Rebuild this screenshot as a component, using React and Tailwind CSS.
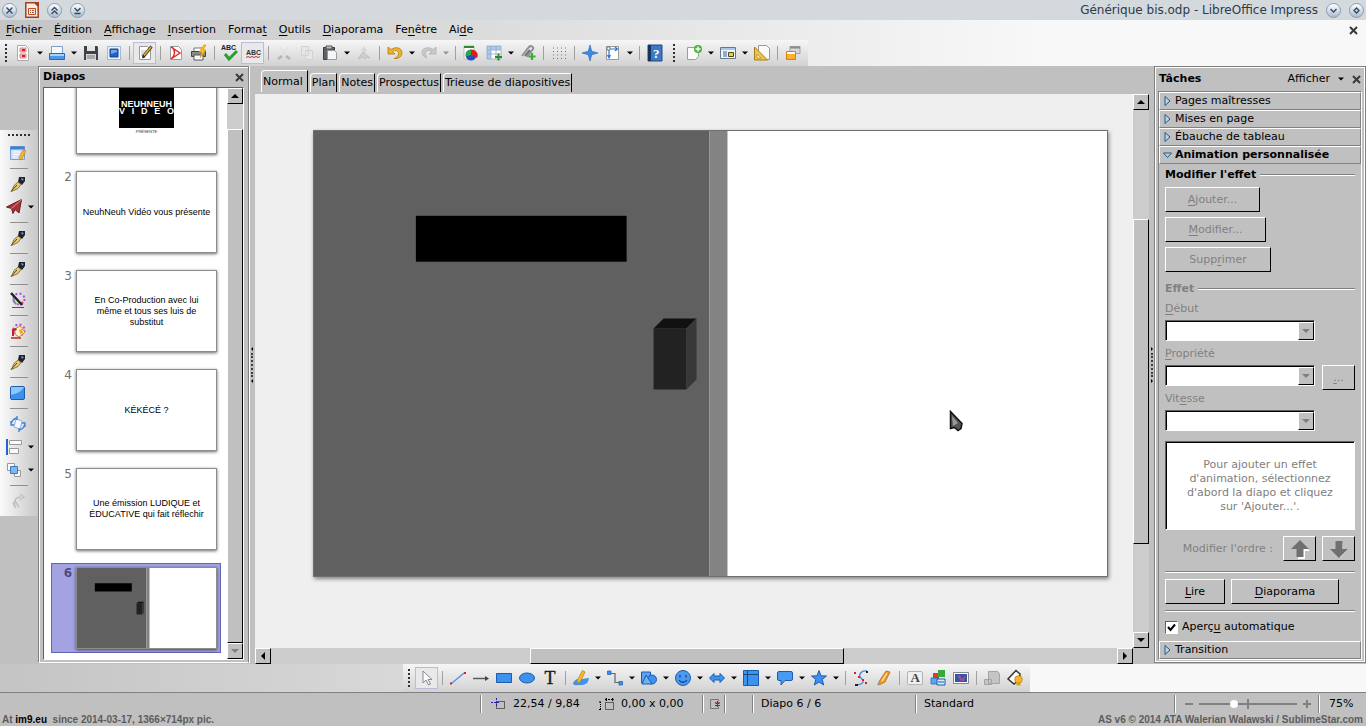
import { clsx } from 'clsx';

const RAISED = 'border border-t-white border-l-white border-r-black border-b-black bg-[#c0c0c0]';
const SUNKEN = 'border border-t-[#606060] border-l-[#606060] border-b-white border-r-white bg-white shadow-[inset_1px_1px_#000]';
const LABEL = 'text-[#808080]';

/* ---------- small drawing helpers ---------- */

function Icon({ children, className }) {
  return (
    <svg viewBox="0 0 16 16" className={clsx('h-4 w-4 shrink-0 overflow-visible', className)} fill="none" aria-hidden="true">
      {children}
    </svg>
  );
}

function Arrow({ dir = 'down', className = 'h-2 w-2' }) {
  const paths = {
    down: 'M0 2h8L4 6z',
    up: 'M0 6h8L4 2z',
    left: 'M6 0v8L2 4z',
    right: 'M2 0v8l4-4z',
  };
  return (
    <svg viewBox="0 0 8 8" className={clsx('shrink-0', className)} fill="currentColor" aria-hidden="true">
      <path d={paths[dir]} />
    </svg>
  );
}

function Cross() {
  return (
    <svg viewBox="0 0 9 9" className="h-[9px] w-[9px]" stroke="#3a3a3a" strokeWidth="2" aria-hidden="true">
      <path d="M1 1l7 7M8 1L1 8" />
    </svg>
  );
}

const page = <path d="M2.5 1.5h8l3 3v10h-11z" fill="#fff" stroke="#9a9a9a" />;

const icons = {
  newDoc: (
    <>
      <path d="M2.5.5h8l3 3v12h-11z" fill="#fff" stroke="#aaa" />
      <path d="M5 3h6v4H5zM5 9h6v4H5z" fill="#e9b8b8" stroke="#d98a8a" />
      <path d="M7 4h3v2H7zM7 10h3v2H7z" fill="#d0202c" />
    </>
  ),
  open: (
    <>
      <path d="M2.5 1.5h11v8h-11z" fill="#f4f8fc" stroke="#7f9fc4" />
      <path d="M.5 8.5h15v6H.5z" fill="#4c97e6" stroke="#2b67ae" />
      <path d="M1 9h14v2H1z" fill="#a9d0f7" />
    </>
  ),
  save: (
    <>
      <path d="M1 1h13l1 1v13H1z" fill="#3f4347" />
      <path d="M4 1h8v5H4z" fill="#e4e6e8" />
      <path d="M3 9h10v6H3z" fill="#d5d8dc" />
      <path d="M4 11h8M4 13h8" stroke="#777" />
    </>
  ),
  mail: (
    <>
      <path d="M1.5 1.5h13v13h-13z" fill="#e9f2fc" stroke="#5e86b8" strokeDasharray="1 1" />
      <path d="M4 4h8v8H4z" fill="#1e63c8" stroke="#17448a" />
      <path d="M5 5h6v2L5 9z" fill="#6fa8ee" />
    </>
  ),
  edit: (
    <>
      {page}
      <path d="M4 6h6M4 8h4M4 10h3" stroke="#bbb" />
      <path d="M14.5 1.5L6 12" stroke="#3b3018" strokeWidth="3" />
      <path d="M14 2L7 10.5" stroke="#e6b83a" strokeWidth="1.5" />
      <path d="M5 13.5l.5-2.5 2 1.5z" fill="#222" />
    </>
  ),
  pdf: (
    <>
      {page}
      <path d="M3 2l9 6-9 6c4-3 5-8 1-12" stroke="#dd2a2a" strokeWidth="1.4" />
    </>
  ),
  print: (
    <>
      <path d="M3 3h9v4H3z" fill="#fff" stroke="#777" />
      <path d="M.5 6.5h14v5H.5z" fill="#8c8c8c" stroke="#444" />
      <path d="M3 10h9v5H3z" fill="#fff" stroke="#555" />
      <path d="M13 0L8 7h3l-2 6 6-8h-3l3-5z" fill="#ffc517" stroke="#d08d00" strokeWidth=".6" />
    </>
  ),
  spell: (
    <>
      <text x="-1" y="5" fontSize="7" fontWeight="700" fontFamily="Liberation Sans, sans-serif" fill="#222">ABC</text>
      <path d="M3 9l4 5 8-8" stroke="#28a035" strokeWidth="3" />
    </>
  ),
  autoSpell: (
    <>
      <text x="1" y="10" fontSize="7" fontWeight="700" fontFamily="Liberation Sans, sans-serif" fill="#333">ABC</text>
      <path d="M1 12.5l2-1 2 1 2-1 2 1 2-1 2 1 2-1" stroke="#c03030" />
    </>
  ),
  cut: (
    <g stroke="#b4b4b4">
      <path d="M4 2l6 9M12 2L6 11" stroke="#dedede" />
      <path d="M2 14l4-3M14 14l-4-3" strokeWidth="2.5" />
    </g>
  ),
  copy: <path d="M2.5 1.5h7v9h-7zM6.5 5.5h7v9h-7z" fill="#e6e6e6" stroke="#d2d2d2" />,
  paste: (
    <>
      <path d="M1.5 2.5h11v12h-11z" fill="#5c6268" stroke="#3b4046" />
      <path d="M4 1h6v3H4z" fill="#b9bdc2" stroke="#555" />
      <path d="M5.5 5.5h7l2 2v7h-9z" fill="#f6f6f6" stroke="#999" />
    </>
  ),
  brush: (
    <>
      <path d="M8 1l3 5-2 2-4-3z" fill="#d8d8d8" />
      <path d="M2 14l5-7 7 6-4-1-1 2-2-2z" fill="#cfcfcf" stroke="#c0c0c0" />
    </>
  ),
  undo: (
    <path
      d="M1 2v7h7L5.5 6.5C8 4.5 11.5 5.5 11.5 8.5S9 13 7 13.5c5 .5 8-2 8-6C15 3 9 1 4 4.5z"
      fill="#eeb32c"
      stroke="#b07a10"
      strokeWidth=".8"
    />
  ),
  redo: (
    <path
      d="M15 2v7H8l2.5-2.5C8 4.5 4.500 5.500 4.500 8.500c0 2 .5 3 1.500 4-3-.5-5-2-5-5C1 3 7 1 12 4.500z"
      fill="#c9c9c9"
      stroke="#b0b0b0"
      strokeWidth=".8"
    />
  ),
  chart: (
    <>
      <path d="M1 1h10v13H1z" fill="#fff" stroke="#bbb" />
      <path d="M1 1h10v2H1z" fill="#2d8a35" />
      <circle cx="8" cy="10" r="5.5" fill="#1c50c4" />
      <path d="M8 10V5a5.500 5.500 0 0 1 6 8z" fill="#d81e1e" />
      <path d="M8 10L3 11.500A5.500 5.500 0 0 1 8 4.500z" fill="#2fa838" />
    </>
  ),
  table: (
    <>
      <path d="M1 1h14v13H1z" fill="#fff" />
      <path d="M1 1h14v4H1zM1 1h4v13H1z" fill="#a9cdf3" />
      <path d="M1 1h14v13H1zM1 5h14M1 9h14M5 1v13M10 1v13" stroke="#8aa0b8" strokeWidth=".7" />
      <path d="M12.500 8.500v7M9 12h7" stroke="#2c8a2c" strokeWidth="2" />
    </>
  ),
  link: (
    <>
      <path d="M2 11l7-9c2-2 5 0 4 2l-6 8" stroke="#8d9196" strokeWidth="2" />
      <path d="M5 11l5-6" stroke="#6d7176" strokeWidth="2" />
      <path d="M12 8v7M8.500 11.500h7" stroke="#3bb030" strokeWidth="2.200" />
    </>
  ),
  grid: (
    <path d="M2 3h13M2 6.500h13M2 10h13M2 13.500h13" stroke="#777" strokeDasharray="1 3" />
  ),
  navigator: (
    <path d="M8 0l1.700 6.300L16 8l-6.300 1.700L8 16 6.300 9.700 0 8l6.300-1.700z" fill="#3b8be6" stroke="#2163b5" strokeWidth=".6" />
  ),
  zoom: (
    <>
      <path d="M1.500 1.500h12v13h-12z" fill="#fff" stroke="#999" />
      <path d="M4 4v8M4 4h8M10 2l2.500 2L10 6M2.500 10L4 13l1.500-3" stroke="#2c77d0" strokeWidth="1.200" />
      <path d="M2 2h3v3H2z" fill="#fff" stroke="#666" strokeWidth=".8" />
    </>
  ),
  help: (
    <>
      <path d="M1 0h14v16H1z" fill="#3d78c4" stroke="#1f4a86" />
      <path d="M1 0h3v16H1z" fill="#16335c" />
      <text x="6" y="13" fontSize="13" fontWeight="700" fontFamily="Liberation Serif, serif" fill="#fff">?</text>
    </>
  ),
  newSlide: (
    <>
      <path d="M1.500 2.500h11v9l-3 3h-8z" fill="#fafafa" stroke="#9c9c9c" />
      <circle cx="12" cy="4" r="4" fill="#49b13c" />
      <path d="M12 1.500v5M9.500 4h5" stroke="#fff" strokeWidth="1.500" />
    </>
  ),
  layout: (
    <>
      <path d="M.5 2.500h15v11H.5z" fill="#eef5fc" stroke="#66788c" />
      <path d="M1 3h14v2H1z" fill="#a9c6e4" />
      <path d="M3 7h4M3 9h4M3 11h4" stroke="#2c62a8" />
      <path d="M8.500 7.500h5v4h-5z" fill="#d8dc3a" stroke="#544a10" />
    </>
  ),
  design: (
    <>
      <path d="M4.500.5h8l3 3v11h-11z" fill="#fafafa" stroke="#999" />
      <path d="M.5 2v13h13z" fill="#eec54a" stroke="#a87d16" />
      <path d="M3 9v4h4z" fill="#fff" stroke="#a87d16" strokeWidth=".7" />
    </>
  ),
  present: (
    <>
      <path d="M5 1.500h10v7H5z" fill="#d6d6d6" stroke="#a2a2a2" />
      <path d="M5 1.500h10v2H5z" fill="#8d8d8d" />
      <path d="M1.500 6.500h9v8h-9z" fill="#ffb02a" stroke="#c98412" />
      <path d="M2 7h8v2H2z" fill="#fff" />
    </>
  ),
  pointer: <path d="M4 1v12l3-3 2.500 5 2-1L9 9.500h4z" fill="#fafafa" stroke="#8a8a8a" />,
  line: (
    <>
      <path d="M1.500 13.500L14 3" stroke="#5a8de0" strokeWidth="1.400" />
      <path d="M0 12.500h2v2H0zM14 2h2v2h-2z" fill="#d3222a" />
    </>
  ),
  arrowLine: (
    <>
      <path d="M0 8.500h13" stroke="#555" strokeWidth="1.400" />
      <path d="M12 6l4 2.500-4 2.500z" fill="#444" />
    </>
  ),
  rect: <path d="M.5 3.500h15v9H.5z" fill="#3d92ee" stroke="#1b5cb0" />,
  ellipse: <ellipse cx="8" cy="8" rx="7.500" ry="5" fill="#3d92ee" stroke="#1b5cb0" />,
  text: (
    <text x="2.500" y="14" fontSize="18" fontFamily="Liberation Serif, serif" fill="#1c1c1c" stroke="#1c1c1c" strokeWidth=".4">T</text>
  ),
  curve: (
    <>
      <path d="M0 13c2-4 5-5 9-4l7-1c-1 5-3 7-8 7s-8 1-8-2z" fill="#3f93ec" />
      <path d="M9.500.5l2.500 1.500-5 10-3 1.500.5-3.500z" fill="#f6bf2c" stroke="#b98012" strokeWidth=".8" />
    </>
  ),
  connector: (
    <>
      <path d="M3 3.500h5v9h5" stroke="#666" strokeWidth="1.200" />
      <path d="M.5 1h3.500v3.500H.5zM12 11.500h3.500V15H12z" fill="#3d92ee" stroke="#1b5cb0" strokeWidth=".7" />
    </>
  ),
  shapes: (
    <>
      <path d="M.5 2h9v11h-9z" fill="#5aa6f2" stroke="#1b5cb0" />
      <circle cx="11" cy="9.500" r="4.500" fill="#3d92ee" stroke="#1b5cb0" />
      <path d="M1 14L5 5l6 9z" fill="#6db2f6" stroke="#1b5cb0" />
    </>
  ),
  smiley: (
    <>
      <circle cx="8" cy="8" r="7.500" fill="#4a9bf0" stroke="#1b5cb0" />
      <path d="M5 5v2.500M11 5v2.500M4 10c2 3 6 3 8 0" stroke="#12438a" strokeWidth="1.300" />
    </>
  ),
  blockArrow: <path d="M.5 8L5 3.500V6h6V3.500L15.500 8 11 12.500V10H5v2.500z" fill="#3d92ee" stroke="#1b5cb0" />,
  flowchart: (
    <>
      <path d="M.5.5h15v15H.5z" fill="#3d92ee" stroke="#1b5cb0" />
      <path d="M4.500 1v14M1 4.500h14" stroke="#14498f" />
    </>
  ),
  callout: (
    <path d="M2 1.500h12q1.500 0 1.500 1.500v6q0 1.500-1.500 1.500H8L4 15v-4.500H2Q.5 10.500.5 9V3Q.5 1.500 2 1.500z" fill="#4a9bf0" stroke="#1b5cb0" />
  ),
  star: <path d="M8 .5l2 5.300 5.500.2-4.300 3.500 1.500 5.500L8 12l-4.700 3 1.500-5.500L.5 6 6 5.800z" fill="#3d92ee" stroke="#1b5cb0" />,
  points: (
    <>
      <path d="M14 1C8 0 5 5 8 8s4 6-5 7" stroke="#4a86d8" strokeWidth="1.300" />
      <path d="M1 2h2v2H1zM5 6h2v2H5zM9 9h2v2H9zM12 12h2v2h-2z" fill="#d3222a" />
      <path d="M2 14h3v2H2zM13 1h2v2h-2z" fill="#222" />
    </>
  ),
  glue: (
    <>
      <path d="M10 1l4 1-5 10-4 2-3 1 2-5z" fill="#f49a2a" stroke="#b06410" strokeWidth=".8" />
      <path d="M5 14l-4 1 2-4z" fill="#9a9a9a" />
      <path d="M11 3L6 11" stroke="#ffd793" strokeWidth="1.500" />
    </>
  ),
  fontwork: (
    <>
      <path d="M2 1.500h12q1.500 0 1.500 1.500v10q0 1.500-1.500 1.500H2Q.5 14.500.5 13V3Q.5 1.500 2 1.500z" fill="#f0f0f0" stroke="#b4b4b4" />
      <text x="3.500" y="12" fontSize="13" fontWeight="700" fontFamily="Liberation Serif, serif" fill="#444">A</text>
    </>
  ),
  fromFile: (
    <>
      <path d="M3 3h6v6H3z" fill="#e13a2c" />
      <path d="M8 0h7v7H8z" fill="#38a838" />
      <path d="M1 8h7v6H1z" fill="#5aa6f2" stroke="#1b5cb0" strokeWidth=".7" />
      <path d="M7 9h8v6H7z" fill="#dcebfb" stroke="#1b5cb0" />
      <path d="M8 12h6" stroke="#1b5cb0" />
    </>
  ),
  gallery: (
    <>
      <path d="M.5 2.500h15v11H.5z" fill="#fff" stroke="#888" />
      <path d="M2 4h12v8H2z" fill="#2d57ad" />
      <path d="M4 6l3-1 2 4 4-4-2 6H8z" fill="#a94a8a" />
    </>
  ),
  rotateOff: <path d="M4.500 1.500h9l2 2v10h-11zM.5 9.500h7v5h-7z" fill="#c4c4c4" stroke="#a4a4a4" />,
  extrusion: (
    <>
      <path d="M9 .5l4 3.500-1 6-5 4-6-5z" fill="#fff" stroke="#333" strokeWidth="1.500" />
      <circle cx="11.500" cy="9.500" r="3.800" fill="#f5b52c" stroke="#b57d10" strokeWidth=".7" />
      <path d="M9.500 12h4v3.500h-4z" fill="#e09a18" />
    </>
  ),
  window: (
    <>
      <path d="M.5 1.500h14v13H.5z" fill="#cfe2f8" stroke="#7da0cc" />
      <path d="M.5 1.500h14v3H.5z" fill="#3a80da" />
      <path d="M3 7h7M3 9.500h6M3 12h4" stroke="#fff" />
      <path d="M13 5l3 1-4 8-3 1 .5-3z" fill="#f7b52c" stroke="#c07d14" strokeWidth=".6" />
    </>
  ),
  pen: (
    <>
      <path d="M9 1h6v4l-3 4-4-3z" fill="#1c2230" />
      <path d="M11 2l3 1-2 2z" fill="#7f93b8" />
      <path d="M8 6l3 2.500-3 4-6.500 3 2.500-6z" fill="#e4c878" stroke="#7a5f22" strokeWidth=".8" />
      <path d="M1 15.500L7 9" stroke="#5a4515" />
    </>
  ),
  send: (
    <>
      <path d="M.5 8L15.500.5 13 14 9 10.500 7 14.500 5.500 9.500z" fill="#a8323a" stroke="#6d1b22" />
      <path d="M5.500 9.500L15.500.5" stroke="#e08e92" />
    </>
  ),
  lineColor: (
    <>
      <circle cx="9" cy="7" r="5.500" stroke="#b04ce0" strokeWidth="2" strokeDasharray="2 2.300" />
      <path d="M3.500 7a5.500 5.500 0 0 0 3 5" stroke="#35b04a" strokeWidth="2" strokeDasharray="2 2" />
      <path d="M13 10l-2 2" stroke="#e0404a" strokeWidth="2" />
      <path d="M1 1l11 12" stroke="#222" strokeWidth="2.500" />
      <path d="M2 15.500h12" stroke="#555" />
    </>
  ),
  fillColor: (
    <>
      <circle cx="9" cy="7" r="5.500" stroke="#b04ce0" strokeWidth="2" strokeDasharray="2 2.300" />
      <path d="M5 6l5-3 5 6-6 5-4-3z" fill="#fff3cf" stroke="#c98c28" />
      <path d="M9 7l3-1 1 4-3 1z" fill="#f0a51e" />
      <path d="M2 6l4-1 1 2-3 1v5H2z" fill="#c8202a" />
      <path d="M1 15h10" stroke="#c8202a" strokeWidth="1.500" />
    </>
  ),
  area: (
    <>
      <path d="M2 1.500h11q1.500 0 1.500 1.500v10q0 1.500-1.500 1.500H2Q.5 14.500.5 13V3Q.5 1.500 2 1.500z" fill="#3b90ee" stroke="#1b5cb0" />
      <path d="M1 2h13q-3 6-13 8z" fill="#8cc6fa" />
    </>
  ),
  rotate: (
    <>
      <path d="M6 3l6 2-2 8-6-2z" fill="#f4f8fd" stroke="#8eb4e0" />
      <path d="M1 9a7 7 0 0 1 6-7M15 7a7 7 0 0 1-6 7M7 0v4M9 12v4M1 5v4h3M15 11V7h-3" stroke="#3b82d8" strokeWidth="1.300" />
    </>
  ),
  align: (
    <>
      <path d="M0 0h2v16H0z" fill="#1f6ac4" />
      <path d="M3.500 1.500h12v4h-12zM3.500 9.500h9v5h-9z" fill="#fafafa" stroke="#999" />
    </>
  ),
  arrange: (
    <>
      <path d="M1.500 1.500h7v7h-7z" fill="#fafafa" stroke="#999" />
      <path d="M8.500 8.500h6v6h-6z" fill="#fafafa" stroke="#999" />
      <path d="M4.500 4.500h7v7h-7z" fill="#7db8f4" stroke="#3a78c4" />
    </>
  ),
  effectOff: <path d="M5 14c-2-5 0-10 6-10M10 1l4 3-4 3M5 8l4 6M3 10l3 5" stroke="#c0c0c0" strokeWidth="1.500" />,
};

/* ---------- toolbars ---------- */

function Grip({ vertical = true, className }) {
  return vertical ? (
    <span className={clsx('flex items-center justify-center', className)}>
      <span className="h-[18px] border-l-2 border-dotted border-[#303030]" />
    </span>
  ) : (
    <span className={clsx('flex justify-center pt-1', className)}>
      <span className="w-[22px] border-t-2 border-dotted border-[#303030]" />
    </span>
  );
}

function Tool({ name, label, pressed, caret, off }) {
  return (
    <span className="flex h-6 items-center">
      <button
        type="button"
        aria-label={label}
        className={clsx(
          'flex h-[22px] w-[23px] items-center justify-center border',
          pressed ? 'border-[#bcbcd8] bg-[#e9e9ec]' : 'border-transparent'
        )}
      >
        <Icon>{icons[name]}</Icon>
      </button>
      {caret && (
        <button type="button" aria-label={`${label}, options`} className="flex h-[22px] w-[11px] items-center justify-center">
          <Arrow className={clsx('h-[6px] w-[6px]', off ? 'text-[#909090]' : 'text-black')} />
        </button>
      )}
    </span>
  );
}

const Sep = () => (
  <span className="flex w-2 shrink-0 justify-center">
    <span className="h-[14px] w-px bg-[#a0a0a0]" />
  </span>
);

const standardTools = [
  ['newDoc', 'Nouveau', 'caret'], ['open', 'Ouvrir', 'caret'], ['save', 'Enregistrer'], ['mail', 'Envoyer'], '|',
  ['edit', 'Mode édition', 'pressed'], '|', ['pdf', 'Exporter en PDF'], ['print', 'Imprimer'], '|',
  ['spell', 'Orthographe'], ['autoSpell', 'Vérification automatique', 'pressed'], '|',
  ['cut', 'Couper'], ['copy', 'Copier'], ['paste', 'Coller', 'caret'], ['brush', 'Pinceau'], '|',
  ['undo', 'Annuler', 'caret'], ['redo', 'Rétablir', 'caret off'], '|',
  ['chart', 'Diagramme'], ['table', 'Tableau', 'caret'], ['link', 'Hyperlien'], '|',
  ['grid', 'Grille'], '|', ['navigator', 'Navigateur'], ['zoom', 'Zoom', 'caret'], '|', ['help', 'Aide'],
];

const slideTools = [
  ['newSlide', 'Nouvelle diapo', 'caret'], ['layout', 'Mise en page', 'caret'], ['design', 'Conception'], '|',
  ['present', 'Lancer le diaporama'],
];

const drawTools = [
  ['pointer', 'Sélection', 'pressed'], '|', ['line', 'Ligne'], ['arrowLine', 'Flèche'], ['rect', 'Rectangle'],
  ['ellipse', 'Ellipse'], ['text', 'Texte'], '|', ['curve', 'Courbe', 'caret'], ['connector', 'Connecteur', 'caret'],
  ['shapes', 'Formes de base', 'caret'], ['smiley', 'Formes des symboles', 'caret'],
  ['blockArrow', 'Flèches pleines', 'caret'], ['flowchart', 'Organigrammes', 'caret'],
  ['callout', 'Légendes', 'caret'], ['star', 'Étoiles', 'caret'], '|', ['points', 'Points'],
  ['glue', 'Points de collage'], '|', ['fontwork', 'Fontwork'], ['fromFile', "À partir d'un fichier"],
  ['gallery', 'Gallery'], '|', ['rotateOff', 'Rotation'], ['extrusion', 'Extrusion'],
];

const sideTools = [
  ['window', 'Styles'], '|', ['pen', 'Ligne'], ['send', 'Extrémités', 'caret'], '|', ['pen', 'Style de ligne'], '|',
  ['pen', 'Largeur de ligne'], '|', ['lineColor', 'Couleur de ligne'], '|', ['fillColor', 'Couleur'], '|',
  ['pen', 'Remplissage'], '|', ['area', 'Ombre'], '|', ['rotate', 'Pivoter'], ['align', 'Alignement', 'caret'],
  ['arrange', 'Position', 'caret'], '|', ['effectOff', 'Interaction'],
];

function ToolList({ tools }) {
  return tools.map((t, i) =>
    t === '|' ? (
      <Sep key={i} />
    ) : (
      <Tool
        key={i}
        name={t[0]}
        label={t[1]}
        pressed={t[2] === 'pressed'}
        caret={t[2]?.startsWith('caret')}
        off={t[2]?.endsWith('off')}
      />
    )
  );
}

function SideToolbar() {
  return (
    <aside className="w-[38px] shrink-0 pt-16">
      <div className="flex flex-col bg-linear-to-r from-[#fafafa] to-[#c8c8c8] pb-1">
        <Grip vertical={false} className="h-[11px]" />
        {sideTools.map((t, i) =>
          t === '|' ? (
            <span key={i} className="flex h-2 items-center pl-2.5">
              <span className="h-px w-[18px] bg-[#909090]" />
            </span>
          ) : (
            <span key={i} className="flex h-[23px] items-center justify-center">
              <span className={clsx('flex items-center', !t[2] && 'pr-0.5')}>
                <Tool name={t[0]} label={t[1]} caret={t[2] === 'caret'} />
              </span>
            </span>
          )
        )}
      </div>
    </aside>
  );
}

/* ---------- title and menu ---------- */

function RoundButton({ label, d }) {
  return (
    <button
      type="button"
      aria-label={label}
      className="flex h-[15px] w-[15px] items-center justify-center rounded-full border border-[#8c9cac] bg-linear-to-b from-white to-[#a9bdd2]"
    >
      <svg viewBox="0 0 9 9" className="h-[9px] w-[9px]" fill="none" stroke="#33475c" strokeWidth="1.3" aria-hidden="true">
        <path d={d} />
      </svg>
    </button>
  );
}

function TitleBar() {
  return (
    <header className="flex h-5 shrink-0 items-center bg-[#d3d9dc] px-0.5 text-[#2c3a4c]">
      <RoundButton label="Fermer" d="M1.500 1.500l6 6M7.500 1.500l-6 6" />
      <svg viewBox="0 0 14 16" className="mx-2 h-4 w-[14px]" fill="none" aria-hidden="true">
        <path d="M.8.8h9l3.400 3.400v11H.8z" fill="#fbe9df" stroke="#a6401c" strokeWidth="1.500" />
        <path d="M9 0h5v5z" fill="#a6401c" />
        <path d="M3.500 6.500h7v6h-7zM5 8.500h1M7 8.500h2M5 10.500h1M7 10.500h2" stroke="#b04e28" />
      </svg>
      <div className="flex gap-2">
        <RoundButton label="Enrouler" d="M1.500 4.500l3-3 3 3M1.500 8l3-3 3 3" />
        <RoundButton label="Au-dessous" d="M1.500 2l3 3 3-3M1.500 7.500h6" />
      </div>
      <h1 className="ml-auto mr-2 text-xs">Générique bis.odp - LibreOffice Impress</h1>
      <div className="flex gap-2">
        <RoundButton label="Réduire" d="M1.500 3l3 3 3-3" />
        <RoundButton label="Maximiser" d="M4.500 2L7 4.500 4.500 7 2 4.500z" />
      </div>
    </header>
  );
}

const menus = [
  ['', 'F', 'ichier'], ['', 'É', 'dition'], ['', 'A', 'ffichage'], ['', 'I', 'nsertion'], ['Forma', 't', ''],
  ['', 'O', 'utils'], ['', 'D', 'iaporama'], ['Fe', 'n', 'être'], ['Ai', 'd', 'e'],
];

function Mnemonic({ parts }) {
  return (
    <>
      {parts[0]}
      <u className="underline-offset-2">{parts[1]}</u>
      {parts[2]}
    </>
  );
}

function MenuBar() {
  return (
    <nav className="flex h-5 items-center pl-1.5 pr-2">
      <ul className="flex gap-3">
        {menus.map((m) => (
          <li key={m.join('')}>
            <button type="button">
              <Mnemonic parts={m} />
            </button>
          </li>
        ))}
      </ul>
      <button type="button" aria-label="Fermer le document" className="ml-auto">
        <Cross />
      </button>
    </nav>
  );
}

/* ---------- scroll bars ---------- */

function ScrollButton({ dir, off }) {
  return (
    <button type="button" aria-label={`Défiler ${dir}`} className={clsx('flex h-4 w-4 shrink-0 items-center justify-center', RAISED)}>
      <Arrow dir={dir} className={clsx('h-2 w-2', off ? 'text-[#808080]' : 'text-black')} />
    </button>
  );
}

/* ---------- slide drawing, used on the canvas and in the list ---------- */

function DoorSlide() {
  return (
    <svg viewBox="0 0 794 446" preserveAspectRatio="none" className="block h-full w-full" aria-label="Diapo 6">
      <rect width="794" height="446" fill="#fff" />
      <rect width="396" height="446" fill="#606060" />
      <rect x="396" width="18" height="446" fill="#838383" />
      <rect x="102" y="85" width="211" height="46" fill="#000" />
      <path d="M340 198h33v61h-33z" fill="#222" />
      <path d="M340 198l10-10h33l-10 10z" fill="#111" />
      <path d="M373 198l10-10v61l-10 10z" fill="#383838" />
    </svg>
  );
}

const slides = [
  { id: 1, cover: true },
  { id: 2, text: 'NeuhNeuh Vidéo vous présente' },
  { id: 3, text: 'En Co-Production avec lui même et tous ses luis de substitut' },
  { id: 4, text: 'KÉKÉCÉ ?' },
  { id: 5, text: 'Une émission LUDIQUE et ÉDUCATIVE qui fait réflechir' },
  { id: 6, door: true },
];

function CoverSlide() {
  return (
    <div className="flex h-full w-full flex-col items-center pt-[15px]">
      <div className="flex h-10 w-[55px] flex-col justify-center overflow-hidden bg-black text-[9px] font-bold leading-[7px] text-white">
        <span className="flex justify-center">NEUHNEUH</span>
        <span className="flex justify-between">
          {['V', 'I', 'D', 'E', 'O'].map((c) => (
            <span key={c}>{c}</span>
          ))}
        </span>
      </div>
      <span className="pt-0.5 text-[4px] leading-1 text-[#333]">PRÉSENTE</span>
    </div>
  );
}

function SlideThumb({ slide }) {
  const selected = slide.id === 6;
  return (
    <li
      className={clsx(
        'flex h-[90px] shrink-0 gap-1 border py-[3px] pr-[3px]',
        selected ? 'border-[#6464b4] bg-[#a3a3e4]' : 'border-transparent'
      )}
    >
      {/* the first slide is scrolled half out, its number with it */}
      <span className={clsx('w-5 text-right text-xs leading-3', selected ? 'font-bold text-[#4c4c7c]' : 'text-[#707070]')}>
        {!slide.cover && slide.id}
      </span>
      <div className="flex min-w-0 flex-1 items-center justify-center border border-[#8c8c8c] bg-white text-center font-['Liberation_Sans',sans-serif] text-[9px] leading-[11px] shadow-[0_1px_3px_rgba(0,0,0,0.6)]">
        {slide.cover && <CoverSlide />}
        {slide.door && <DoorSlide />}
        {slide.text && <p className={slide.id === 2 ? 'whitespace-nowrap' : 'w-[120px]'}>{slide.text}</p>}
      </div>
    </li>
  );
}

function SlidePanel() {
  return (
    <section className="mb-px flex w-[211px] shrink-0 flex-col border border-[#808080] border-b-white px-1 pb-0.5 shadow-[inset_1px_1px_#fff,1px_0_#fff]">
      <div className="flex h-5 shrink-0 items-center justify-between">
        <h2 className="font-bold">Diapos</h2>
        <button type="button" aria-label="Fermer le volet">
          <Cross />
        </button>
      </div>
      <div className="flex min-h-0 flex-1 border border-[#606060] border-r-white border-b-white bg-white">
        <ol className="flex min-h-0 min-w-0 flex-1 flex-col justify-end gap-[9px] overflow-hidden pb-1.5 pl-[7px] pr-1.5">
          {slides.map((s) => (
            <SlideThumb key={s.id} slide={s} />
          ))}
        </ol>
        <div className="flex w-4 flex-col bg-[#ccc]">
          <ScrollButton dir="up" />
          <div className="grow-[25] basis-0" />
          <div className={clsx('grow-[514] basis-0', RAISED)} />
          <ScrollButton dir="down" off />
        </div>
      </div>
    </section>
  );
}

/* ---------- splitter ---------- */

function Splitter({ dir, className }) {
  return (
    <div className={clsx('flex shrink-0 flex-col items-center justify-center gap-0.5', className)}>
      <Arrow dir={dir} className="h-1 w-1" />
      <span className="h-6 border-l-2 border-dotted border-[#404040]" />
      <Arrow dir={dir} className="h-1 w-1" />
    </div>
  );
}

/* ---------- centre ---------- */

const views = ['Normal', 'Plan', 'Notes', 'Prospectus', 'Trieuse de diapositives'];

function Workspace() {
  return (
    <main className="flex min-w-0 flex-1 flex-col">
      <div role="tablist" className="flex h-7 shrink-0 items-end gap-0.5 pb-0.5 pl-1.5">
        {views.map((v, i) => (
          <button
            key={v}
            type="button"
            role="tab"
            aria-selected={i === 0}
            className={clsx(
              'whitespace-nowrap rounded-tl-sm border border-b-0 border-l-white border-r-black border-t-white px-px',
              i === 0 ? 'h-[22px] pr-1' : 'h-[19px]'
            )}
          >
            {v}
          </button>
        ))}
      </div>
      <div className="flex min-h-0 flex-1">
        <div className="relative min-w-0 flex-1 bg-[#efefef] pb-[71px] pl-[58px] pr-[25px] pt-9">
          <div className="h-full border border-[#707070] bg-white shadow-[1px_2px_4px_rgba(0,0,0,0.45)]">
            <DoorSlide />
          </div>
          {/* mouse pointer floating over the slide */}
          <svg viewBox="0 0 14 22" className="absolute left-[79%] top-[57%] h-[22px] w-[14px]" aria-hidden="true">
            <path d="M1.500 1.500v17l4-1 3.500 3 3-2 1-5z" fill="#555" stroke="#111" strokeWidth="1.500" />
            <path d="M3 6l6 7-5 3z" fill="#999" />
          </svg>
        </div>
        <div className="flex w-4 flex-col bg-[#ccc]">
          <ScrollButton dir="up" />
          <div className="grow-[109] basis-0" />
          <div className={clsx('grow-[325] basis-0', RAISED)} />
          <div className="grow-[88] basis-0" />
          <ScrollButton dir="down" />
        </div>
      </div>
      <div className="mr-4 flex h-4 bg-[#ccc]">
        <ScrollButton dir="left" />
        <div className="grow-[260] basis-0" />
        <div className={clsx('grow-[312] basis-0', RAISED)} />
        <div className="grow-[274] basis-0" />
        <ScrollButton dir="right" />
      </div>
    </main>
  );
}

/* ---------- task pane ---------- */

function PaneRow({ children, open }) {
  return (
    <button
      type="button"
      aria-expanded={!!open}
      className={clsx(
        'flex h-[18px] w-full shrink-0 items-center gap-[3px] border border-[#808080] border-l-white border-t-white pl-[3px] text-left',
        open && 'font-bold'
      )}
    >
      <svg viewBox="0 0 9 10" className="h-[10px] w-[9px]" fill="#b4d8f4" stroke="#22577e" aria-hidden="true">
        {open ? <path d="M.5 3h8l-4 4.500z" /> : <path d="M2 .5v9L7 5z" />}
      </svg>
      {children}
    </button>
  );
}

function Heading({ children, off }) {
  return (
    <div className={clsx('flex h-4 items-center gap-1 font-bold', off && LABEL)}>
      <h3>{children}</h3>
      <Rule className="flex-1" />
    </div>
  );
}

function Rule({ className }) {
  return <div className={clsx('h-0.5 border-t border-[#808080] bg-white', className)} />;
}

function PushButton({ children, className, disabled, label }) {
  return (
    <button
      type="button"
      disabled={disabled}
      aria-label={label}
      className={clsx('flex h-[25px] items-center justify-center', RAISED, disabled && LABEL, className)}
    >
      <span>{children}</span>
    </button>
  );
}

function Combo({ id, parts, children }) {
  return (
    <div className="flex h-[45px] flex-col">
      <label htmlFor={id} className={clsx('h-[19px] leading-4', LABEL)}>
        <Mnemonic parts={parts} />
      </label>
      <div className="flex h-[21px] items-start gap-[7px]">
        <div className="relative">
          <select id={id} disabled className={clsx('block h-[21px] w-[150px] appearance-none', SUNKEN)} />
          <span className={clsx('pointer-events-none absolute right-px top-0.5 flex h-[18px] w-4 items-center justify-center', RAISED)}>
            <Arrow className="h-2 w-2 text-[#808080]" />
          </span>
        </div>
        {children}
      </div>
    </div>
  );
}

function BigArrow({ up }) {
  return (
    <svg viewBox="0 0 20 20" className="h-5 w-5" aria-hidden="true">
      <path d={up ? 'M11 3l9 9h-5v8H8' : 'M14 2v8h5l-8 9'} fill="#fff" />
      <path d={up ? 'M10 1l9 9h-5.500v8h-7v-8H1z' : 'M10 19l9-9h-5.500V2h-7v8H1z'} fill="#707070" />
    </svg>
  );
}

function TaskPane() {
  return (
    <section className="mb-px flex w-[212px] shrink-0 flex-col border border-[#808080] px-[3px] pb-0.5 shadow-[inset_1px_1px_#fff,inset_-1px_-1px_#fff]">
      <div className="flex h-6 shrink-0 items-center pl-px pr-px">
        <h2 className="font-bold">Tâches</h2>
        <button type="button" className="ml-auto mr-2 flex items-center gap-2">
          Afficher <Arrow className="h-[6px] w-[6px]" />
        </button>
        <button type="button" aria-label="Fermer le volet des tâches">
          <Cross />
        </button>
      </div>

      <div className="flex flex-1 flex-col border border-[#808080] border-r-white border-b-white">
        <PaneRow>Pages maîtresses</PaneRow>
        <PaneRow>Mises en page</PaneRow>
        <PaneRow>Ébauche de tableau</PaneRow>
        <PaneRow open>Animation personnalisée</PaneRow>

        <form className="flex flex-1 flex-col px-1.5 pt-[3px]">
          <Heading>Modifier l'effet</Heading>
          <div className="mt-1 flex flex-col gap-[5px]">
            <PushButton disabled className="w-[95px]"><Mnemonic parts={['', 'A', 'jouter...']} /></PushButton>
            <PushButton disabled className="w-[101px]"><Mnemonic parts={['', 'M', 'odifier...']} /></PushButton>
            <PushButton disabled className="w-[106px]"><Mnemonic parts={['Supp', 'r', 'imer']} /></PushButton>
          </div>
          <div className="mt-[9px]">
            <Heading off>Effet</Heading>
          </div>
          <div className="mt-1">
            <Combo id="debut" parts={['', 'D', 'ébut']} />
            <Combo id="propriete" parts={['', 'P', 'ropriété']}>
              <PushButton disabled label="Options de propriété" className="w-[33px]"><Mnemonic parts={['', '.', '..']} /></PushButton>
            </Combo>
            <Combo id="vitesse" parts={['Vit', 'e', 'sse']} />
          </div>
          <div className={clsx('mt-[5px] flex h-[89px] items-center px-3', SUNKEN)}>
            <p className={clsx('text-center leading-[14px]', LABEL)}>
              Pour ajouter un effet d'animation, sélectionnez d'abord la diapo et cliquez sur 'Ajouter...'.
            </p>
          </div>
          <div className="mt-1.5 flex items-center justify-end gap-1.5">
            <span className={clsx('mr-1', LABEL)}>Modifier l'ordre :</span>
            <PushButton disabled label="Monter" className="w-[33px]"><BigArrow up /></PushButton>
            <PushButton disabled label="Descendre" className="w-[33px]"><BigArrow /></PushButton>
          </div>
          <Rule className="mt-2.5" />
          <div className="mt-1.5 flex gap-1.5">
            <PushButton className="w-[60px]"><Mnemonic parts={['', 'L', 'ire']} /></PushButton>
            <PushButton className="w-[108px]"><Mnemonic parts={['', 'D', 'iaporama']} /></PushButton>
          </div>
          <Rule className="mt-1.5" />
          <label className="mt-[7px] flex items-center gap-1">
            <span className="relative flex">
              <input
                type="checkbox"
                defaultChecked
                className="peer h-[13px] w-[13px] appearance-none border border-[#606060] border-b-white border-r-white bg-white"
              />
              <svg viewBox="0 0 13 13" className="pointer-events-none absolute inset-0 hidden h-[13px] w-[13px] peer-checked:block" fill="none" stroke="#000" strokeWidth="2" aria-hidden="true">
                <path d="M3 6l2.500 3L10 3.500" />
              </svg>
            </span>
            <span><Mnemonic parts={['Aperç', 'u', ' automatique']} /></span>
          </label>
        </form>
        <PaneRow>Transition</PaneRow>
      </div>
    </section>
  );
}

/* ---------- status bar ---------- */

function StatusCell({ children, className }) {
  return (
    <div className={clsx('flex h-[18px] items-center border-l border-[#808080] shadow-[inset_1px_0_#fff]', className)}>
      {children}
    </div>
  );
}

function StatusBar() {
  return (
    <footer className="shrink-0 border-t border-[#808080] bg-[#c0c0c0]">
      <div className="flex items-center pt-0.5">
        <div className="w-[480px]" />
        <StatusCell className="w-[222px] gap-1.5 pl-2.5">
          <svg viewBox="0 0 16 12" className="h-3 w-4" fill="none" aria-hidden="true">
            <path d="M5.500 3.500h8v7h-8z" stroke="#000" strokeDasharray="1 1" />
            <path d="M5.500 0v8M0 4.500h9" stroke="#22a" strokeDasharray="2 1" />
          </svg>
          <span className="w-20 whitespace-nowrap">22,54 / 9,84</span>
          <svg viewBox="0 0 16 12" className="h-3 w-4" fill="none" aria-hidden="true">
            <path d="M6.500 4.500h8v7h-8zM1.500 4v8" stroke="#000" strokeDasharray="1 1" />
            <path d="M6 1.500h9M8 0L6 1.500 8 3M13 0l2 1.500L13 3M0 4h3M0 11.500h3" stroke="#000" strokeDasharray="2 1" />
          </svg>
          <span className="whitespace-nowrap">0,00 x 0,00</span>
        </StatusCell>
        <StatusCell className="w-[22px] pl-1.5">
          <svg viewBox="0 0 12 12" className="h-3 w-3" fill="none" aria-hidden="true">
            <path d="M9.500 3V1.500h-8v9h8V9" stroke="#777" />
            <path d="M8.500 3v6M6 4.500l5 3M11 4.500l-5 3" stroke="#a01c24" strokeWidth="1.200" />
          </svg>
        </StatusCell>
        <StatusCell className="w-7" />
        <StatusCell className="w-[163px] pl-2">Diapo 6 / 6</StatusCell>
        <StatusCell className="flex-1 pl-2">Standard</StatusCell>
        <StatusCell className="w-[144px] gap-1.5 pl-2.5 text-[#808080]">
          <button type="button" aria-label="Zoom arrière" className="flex h-2 w-2 items-center">
            <span className="h-0.5 w-2 bg-[#808080]" />
          </button>
          <span className="relative flex items-center">
            <span className="absolute left-12 h-[10px] w-0.5 bg-[#808080]" />
            <input
              type="range"
              aria-label="Zoom"
              min="0"
              max="100"
              defaultValue="35"
              className="relative h-2 w-[98px] appearance-none bg-transparent [&::-webkit-slider-runnable-track]:h-0.5 [&::-webkit-slider-runnable-track]:bg-[#808080] [&::-webkit-slider-thumb]:-mt-[3px] [&::-webkit-slider-thumb]:h-2 [&::-webkit-slider-thumb]:w-2 [&::-webkit-slider-thumb]:appearance-none [&::-webkit-slider-thumb]:rounded-full [&::-webkit-slider-thumb]:bg-white"
            />
          </span>
          <button type="button" aria-label="Zoom avant">
            <svg viewBox="0 0 8 8" className="h-2 w-2" stroke="#808080" strokeWidth="2" aria-hidden="true">
              <path d="M4 0v8M0 4h8" />
            </svg>
          </button>
        </StatusCell>
        <StatusCell className="w-12 pl-2.5">75%</StatusCell>
      </div>
      <div className="flex h-[13px] justify-between pl-0.5 pr-[3px] font-['Liberation_Sans',sans-serif] text-[10px] font-bold leading-[14px] text-[#5c5c5c]">
        <p className="whitespace-pre">
          At <a href="#im9" className="text-black">im9.eu</a>  since 2014-03-17, 1366×714px pic.
        </p>
        <p>AS v6 © 2014 ATA Walerian Walawski / SublimeStar.com</p>
      </div>
    </footer>
  );
}

export default function App() {
  return (
    <div className="flex h-screen flex-col overflow-hidden bg-[#c0c0c0] font-['DejaVu_Sans',sans-serif] text-[11px] leading-4 text-black">
      <TitleBar />
      <div className="shrink-0 bg-[linear-gradient(90deg,#c4c4c4,#f8f8f8_76%)]">
        <MenuBar />
        <div className="flex">
          <div className="flex h-[26px] items-center bg-linear-to-b from-[#f6f6f6] to-[#d2d2d2] pr-1">
            <Grip className="w-[11px]" />
            <ToolList tools={standardTools} />
            <Grip className="w-4" />
            <ToolList tools={slideTools} />
          </div>
        </div>
      </div>

      <div className="flex min-h-0 flex-1">
        <SideToolbar />
        <SlidePanel />
        <Splitter dir="left" className="w-1.5" />
        <Workspace />
        <Splitter dir="right" className="w-[5px]" />
        <TaskPane />
      </div>

      <div className="flex h-7 shrink-0 bg-[linear-gradient(90deg,#c4c4c4,#f8f8f8_76%)] pl-[403px]">
        <div className="flex items-center bg-linear-to-b from-[#f6f6f6] to-[#d2d2d2] pr-1">
          <Grip className="w-3" />
          <ToolList tools={drawTools} />
        </div>
      </div>
      <StatusBar />
    </div>
  );
}
